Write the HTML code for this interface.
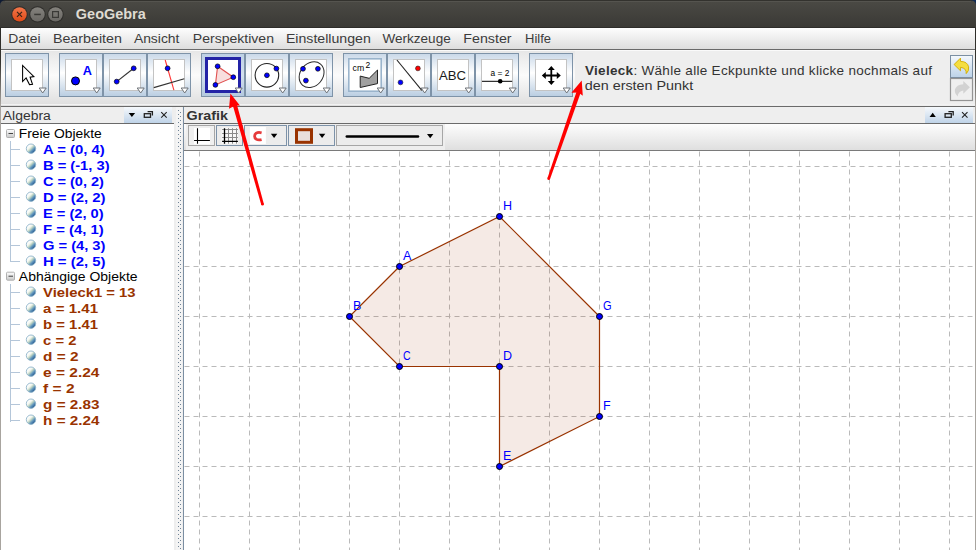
<!DOCTYPE html>
<html><head><meta charset="utf-8"><title>GeoGebra</title>
<style>
html,body{margin:0;padding:0;background:#fff;}
body{width:976px;height:550px;overflow:hidden;position:relative;font-family:"Liberation Sans", sans-serif;}
svg{position:absolute;left:0;top:0;display:block;font-family:"Liberation Sans", sans-serif;}
</style></head><body>
<svg width="976" height="550" viewBox="0 0 976 550">

<defs>
 <linearGradient id="gMenu" x1="0" y1="0" x2="0" y2="1"><stop offset="0" stop-color="#fdfdfd"/><stop offset="1" stop-color="#dedede"/></linearGradient>
 <linearGradient id="gTool" x1="0" y1="0" x2="0" y2="1"><stop offset="0" stop-color="#e6e6e6"/><stop offset="0.45" stop-color="#fbfbfb"/><stop offset="1" stop-color="#dedede"/></linearGradient>
 <linearGradient id="gBtn" x1="0" y1="0" x2="0" y2="1"><stop offset="0" stop-color="#c9d8e8"/><stop offset="0.45" stop-color="#ffffff"/><stop offset="1" stop-color="#b9cde1"/></linearGradient>
 <linearGradient id="gBtnSel" x1="0" y1="0" x2="0" y2="1"><stop offset="0" stop-color="#bdd0e5"/><stop offset="0.5" stop-color="#d2e0ee"/><stop offset="1" stop-color="#b3c8de"/></linearGradient>
 <linearGradient id="gHdr" x1="0" y1="0" x2="0" y2="1"><stop offset="0" stop-color="#f6f9fc"/><stop offset="1" stop-color="#bfd3e8"/></linearGradient>
 <linearGradient id="gStyle" x1="0" y1="0" x2="0" y2="1"><stop offset="0" stop-color="#fdfdfd"/><stop offset="1" stop-color="#dfdfdf"/></linearGradient>
 <linearGradient id="gUndo" x1="0" y1="0" x2="0" y2="1"><stop offset="0" stop-color="#f4f8fc"/><stop offset="1" stop-color="#bcd2e8"/></linearGradient>
 <linearGradient id="gClose" x1="0" y1="0" x2="0" y2="1"><stop offset="0" stop-color="#f2764a"/><stop offset="1" stop-color="#df4a17"/></linearGradient>
 <linearGradient id="gGrayBtn" x1="0" y1="0" x2="0" y2="1"><stop offset="0" stop-color="#84827d"/><stop offset="1" stop-color="#6a6864"/></linearGradient>
 <linearGradient id="gMinus" x1="0" y1="0" x2="0" y2="1"><stop offset="0" stop-color="#ffffff"/><stop offset="1" stop-color="#c8c8c8"/></linearGradient>
 <linearGradient id="gBall" x1="0.2" y1="0.2" x2="0.8" y2="0.8"><stop offset="0" stop-color="#ffffff"/><stop offset="0.3" stop-color="#f2f6ee"/><stop offset="0.5" stop-color="#bdd3c2"/><stop offset="0.75" stop-color="#6197bd"/><stop offset="1" stop-color="#35679a"/></linearGradient>
 <linearGradient id="gBorder" gradientUnits="userSpaceOnUse" x1="0" y1="28" x2="0" y2="105"><stop offset="0" stop-color="#2c2b27"/><stop offset="0.45" stop-color="#35342f"/><stop offset="1" stop-color="#a8a49f"/></linearGradient>
 <linearGradient id="gBorderR" gradientUnits="userSpaceOnUse" x1="0" y1="28" x2="0" y2="105"><stop offset="0" stop-color="#3c3b37"/><stop offset="0.45" stop-color="#4a4944"/><stop offset="1" stop-color="#c4c1bb"/></linearGradient>
 <linearGradient id="gTitle" x1="0" y1="0" x2="0" y2="1"><stop offset="0" stop-color="#4b4a45"/><stop offset="1" stop-color="#3a3935"/></linearGradient>
 <pattern id="pDots" x="0" y="0" width="4" height="4" patternUnits="userSpaceOnUse"><rect x="0" y="0" width="1" height="1" fill="#6f8396"/><rect x="2" y="2" width="1" height="1" fill="#6f8396"/></pattern>
</defs>
<rect x="0" y="0" width="976" height="550" fill="#ffffff"/>
<rect x="0" y="0" width="976" height="28" fill="url(#gTitle)"/>
<rect x="0" y="0" width="976" height="1" fill="#33322e"/>
<rect x="0" y="27" width="976" height="1" fill="#2e2d2a"/>
<path d="M0 0 H5.5 A5.5 5.5 0 0 0 0 5.5 Z" fill="#0f1b33"/>
<path d="M976 0 H970.5 A5.5 5.5 0 0 1 976 5.5 Z" fill="#102a55"/>
<rect x="5" y="1" width="966" height="1" fill="#55544f"/>
<circle cx="19.5" cy="14.4" r="8.2" fill="#2e2d2a"/>
<circle cx="19.5" cy="14.4" r="7.2" fill="url(#gClose)"/>
<circle cx="37.5" cy="14.4" r="8.2" fill="#2e2d2a"/>
<circle cx="37.5" cy="14.4" r="7.2" fill="url(#gGrayBtn)"/>
<circle cx="55.5" cy="14.4" r="8.2" fill="#2e2d2a"/>
<circle cx="55.5" cy="14.4" r="7.2" fill="url(#gGrayBtn)"/>
<path d="M17 11.9 L22 16.9 M22 11.9 L17 16.9" stroke="#3a2418" stroke-width="1.2"/>
<rect x="34.2" y="13.7" width="6.6" height="1.5" fill="#3a3936"/>
<rect x="52.6" y="11.6" width="5.8" height="5.8" fill="none" stroke="#3a3936" stroke-width="1.2"/>
<text x="75.88" y="19" font-size="14" font-weight="bold" fill="#dfdbd2" textLength="69.84" lengthAdjust="spacingAndGlyphs" >GeoGebra</text>
<rect x="0" y="28" width="976" height="21" fill="url(#gMenu)"/>
<rect x="0" y="49" width="976" height="1" fill="#6a6a6a"/>
<text x="8.31" y="43" font-size="13" font-weight="normal" fill="#3c3c3c" textLength="32.38" lengthAdjust="spacingAndGlyphs" >Datei</text>
<text x="52.91" y="43" font-size="13" font-weight="normal" fill="#3c3c3c" textLength="68.98" lengthAdjust="spacingAndGlyphs" >Bearbeiten</text>
<text x="133.91" y="43" font-size="13" font-weight="normal" fill="#3c3c3c" textLength="45.48" lengthAdjust="spacingAndGlyphs" >Ansicht</text>
<text x="192.81" y="43" font-size="13" font-weight="normal" fill="#3c3c3c" textLength="81.18" lengthAdjust="spacingAndGlyphs" >Perspektiven</text>
<text x="285.91" y="43" font-size="13" font-weight="normal" fill="#3c3c3c" textLength="84.88" lengthAdjust="spacingAndGlyphs" >Einstellungen</text>
<text x="382.51" y="43" font-size="13" font-weight="normal" fill="#3c3c3c" textLength="68.18" lengthAdjust="spacingAndGlyphs" >Werkzeuge</text>
<text x="463.31" y="43" font-size="13" font-weight="normal" fill="#3c3c3c" textLength="48.28" lengthAdjust="spacingAndGlyphs" >Fenster</text>
<text x="525.11" y="43" font-size="13" font-weight="normal" fill="#3c3c3c" textLength="25.98" lengthAdjust="spacingAndGlyphs" >Hilfe</text>
<rect x="0" y="50" width="575" height="56" fill="url(#gTool)"/>
<rect x="575" y="50" width="401" height="56" fill="#eeeeee"/>
<rect x="0" y="50" width="976" height="1" fill="#fafafa"/>
<rect x="0" y="104" width="976" height="1" fill="#f2f2f2"/>
<rect x="0" y="106" width="976" height="1" fill="#6a6a6a"/>
<rect x="5.5" y="53.5" width="43" height="43" fill="url(#gBtn)" stroke="#7e93a8"/>
<rect x="11.5" y="59.5" width="31" height="31" fill="#fff" stroke="#c3c3c3"/>
<rect x="59.5" y="53.5" width="43" height="43" fill="url(#gBtn)" stroke="#7e93a8"/>
<rect x="65.5" y="59.5" width="31" height="31" fill="#fff" stroke="#c3c3c3"/>
<rect x="103.5" y="53.5" width="43" height="43" fill="url(#gBtn)" stroke="#7e93a8"/>
<rect x="109.5" y="59.5" width="31" height="31" fill="#fff" stroke="#c3c3c3"/>
<rect x="147.5" y="53.5" width="43" height="43" fill="url(#gBtn)" stroke="#7e93a8"/>
<rect x="153.5" y="59.5" width="31" height="31" fill="#fff" stroke="#c3c3c3"/>
<rect x="201.5" y="53.5" width="43" height="43" fill="url(#gBtnSel)" stroke="#7e93a8"/>
<rect x="245.5" y="53.5" width="43" height="43" fill="url(#gBtn)" stroke="#7e93a8"/>
<rect x="251.5" y="59.5" width="31" height="31" fill="#fff" stroke="#c3c3c3"/>
<rect x="289.5" y="53.5" width="43" height="43" fill="url(#gBtn)" stroke="#7e93a8"/>
<rect x="295.5" y="59.5" width="31" height="31" fill="#fff" stroke="#c3c3c3"/>
<rect x="343.5" y="53.5" width="43" height="43" fill="url(#gBtn)" stroke="#7e93a8"/>
<rect x="349.5" y="59.5" width="31" height="31" fill="#fff" stroke="#c3c3c3"/>
<rect x="387.5" y="53.5" width="43" height="43" fill="url(#gBtn)" stroke="#7e93a8"/>
<rect x="393.5" y="59.5" width="31" height="31" fill="#fff" stroke="#c3c3c3"/>
<rect x="431.5" y="53.5" width="43" height="43" fill="url(#gBtn)" stroke="#7e93a8"/>
<rect x="437.5" y="59.5" width="31" height="31" fill="#fff" stroke="#c3c3c3"/>
<rect x="475.5" y="53.5" width="43" height="43" fill="url(#gBtn)" stroke="#7e93a8"/>
<rect x="481.5" y="59.5" width="31" height="31" fill="#fff" stroke="#c3c3c3"/>
<rect x="529.5" y="53.5" width="43" height="43" fill="url(#gBtn)" stroke="#7e93a8"/>
<rect x="535.5" y="59.5" width="31" height="31" fill="#fff" stroke="#c3c3c3"/>
<rect x="206.5" y="58.5" width="33" height="33" fill="#fff" stroke="#2323a6" stroke-width="3"/>
<path d="M22.6 65.4 L22.6 81.5 L26.1 77.9 L29.5 84.6 L32.5 84.3 L30.1 77.2 L33.9 76.6 Z" fill="#fff" stroke="#000" stroke-width="1.05" stroke-linejoin="miter"/>
<circle cx="75.5" cy="80.9" r="4" fill="#0000ff" stroke="#000" stroke-width="1"/>
<text x="82.8" y="75.3" font-family='"Liberation Sans", sans-serif' font-size="13" font-weight="bold" fill="#0000ff" textLength="9.2" lengthAdjust="spacingAndGlyphs">A</text>
<line x1="116.7" y1="81.6" x2="133.7" y2="68.3" stroke="#333" stroke-width="1.2"/>
<circle cx="116.7" cy="81.6" r="2.4" fill="#0000ff" stroke="#000" stroke-width="0.7"/>
<circle cx="133.7" cy="68.3" r="2.4" fill="#0000ff" stroke="#000" stroke-width="0.7"/>
<line x1="165.2" y1="60" x2="173.9" y2="90.2" stroke="#ff3333" stroke-width="1.1"/>
<line x1="153.8" y1="87.6" x2="184.3" y2="78.7" stroke="#333" stroke-width="1.1"/>
<circle cx="167.6" cy="68.3" r="2.4" fill="#0000ff" stroke="#000" stroke-width="0.7"/>
<path d="M217.6 66.3 L233.3 77.2 L215.4 84.9 Z" fill="#f8dede" stroke="#e05050" stroke-width="1.1"/>
<circle cx="217.6" cy="66.3" r="2.4" fill="#0000ff" stroke="#000" stroke-width="0.7"/>
<circle cx="233.3" cy="77.2" r="2.4" fill="#0000ff" stroke="#000" stroke-width="0.7"/>
<circle cx="215.4" cy="84.9" r="2.4" fill="#0000ff" stroke="#000" stroke-width="0.7"/>
<circle cx="266.9" cy="75.3" r="11.8" fill="none" stroke="#222" stroke-width="1.1"/>
<circle cx="266.9" cy="75.3" r="2.4" fill="#0000ff" stroke="#000" stroke-width="0.7"/>
<circle cx="276.4" cy="68.6" r="2.4" fill="#0000ff" stroke="#000" stroke-width="0.7"/>
<ellipse cx="311.6" cy="74.7" rx="13.9" ry="11.3" transform="rotate(-50 311.6 74.7)" fill="none" stroke="#2a2a2a" stroke-width="1"/>
<circle cx="303" cy="68.8" r="2.4" fill="#0000ff" stroke="#000" stroke-width="0.7"/>
<circle cx="317.9" cy="68.8" r="2.4" fill="#0000ff" stroke="#000" stroke-width="0.7"/>
<circle cx="305.9" cy="80.6" r="2.4" fill="#0000ff" stroke="#000" stroke-width="0.7"/>
<rect x="348.8" y="58.8" width="32.4" height="32.4" fill="#fff" stroke="#9ab4cc" stroke-width="1.6"/>
<text x="352.6" y="70.5" font-family='"Liberation Sans", sans-serif' font-size="9.5" fill="#000" textLength="11.6" lengthAdjust="spacingAndGlyphs">cm</text>
<text x="365.4" y="68.2" font-family='"Liberation Sans", sans-serif' font-size="8.5" fill="#000">2</text>
<path d="M360.2 76.1 L369.2 78.3 L377.5 70 L377.5 83.6 L360.2 87.5 Z" fill="#a0a0a0" stroke="#222" stroke-width="1"/>
<line x1="396.9" y1="60" x2="421.8" y2="90.4" stroke="#222" stroke-width="1.1"/>
<circle cx="417.9" cy="68.4" r="2.4" fill="#ff0000" stroke="#222" stroke-width="0.6"/>
<circle cx="400.5" cy="82.4" r="2.4" fill="#0000ff" stroke="#222" stroke-width="0.6"/>
<text x="439" y="79.7" font-family='"Liberation Sans", sans-serif' font-size="13" fill="#1a1a1a" textLength="27" lengthAdjust="spacingAndGlyphs">ABC</text>
<text x="490.6" y="75.9" font-family='"Liberation Sans", sans-serif' font-size="9.5" fill="#000" textLength="18.8" lengthAdjust="spacingAndGlyphs">a = 2</text>
<line x1="482" y1="81.3" x2="512.2" y2="81.3" stroke="#000" stroke-width="1"/>
<circle cx="500.2" cy="81.2" r="2.3" fill="#000"/>
<path d="M551.3 68 V83 M543.8 75.5 H558.8" stroke="#000" stroke-width="1.8"/>
<path d="M551.3 66 L547.8 70 H554.8 Z M551.3 85 L547.8 81 H554.8 Z M541.8 75.5 L545.8 72 V79 Z M560.8 75.5 L556.8 72 V79 Z" fill="#000"/>
<path d="M39.2 88 H46.2 L42.7 93 Z" fill="#fff" stroke="#6e7378" stroke-width="1"/>
<path d="M93.2 88 H100.2 L96.7 93 Z" fill="#fff" stroke="#6e7378" stroke-width="1"/>
<path d="M137.2 88 H144.2 L140.7 93 Z" fill="#fff" stroke="#6e7378" stroke-width="1"/>
<path d="M181.2 88 H188.2 L184.7 93 Z" fill="#fff" stroke="#6e7378" stroke-width="1"/>
<path d="M235.2 88 H242.2 L238.7 93 Z" fill="#fff" stroke="#6e7378" stroke-width="1"/>
<path d="M279.2 88 H286.2 L282.7 93 Z" fill="#fff" stroke="#6e7378" stroke-width="1"/>
<path d="M323.2 88 H330.2 L326.7 93 Z" fill="#fff" stroke="#6e7378" stroke-width="1"/>
<path d="M377.2 88 H384.2 L380.7 93 Z" fill="#fff" stroke="#6e7378" stroke-width="1"/>
<path d="M421.2 88 H428.2 L424.7 93 Z" fill="#fff" stroke="#6e7378" stroke-width="1"/>
<path d="M465.2 88 H472.2 L468.7 93 Z" fill="#fff" stroke="#6e7378" stroke-width="1"/>
<path d="M509.2 88 H516.2 L512.7 93 Z" fill="#fff" stroke="#6e7378" stroke-width="1"/>
<path d="M563.2 88 H570.2 L566.7 93 Z" fill="#fff" stroke="#6e7378" stroke-width="1"/>
<text x="585" y="75" font-size="13.5" fill="#333" textLength="347" lengthAdjust="spacing"><tspan font-weight="bold">Vieleck</tspan>: Wähle alle Eckpunkte und klicke nochmals auf</text>
<text x="584.80" y="89.5" font-size="13.5" font-weight="normal" fill="#333" textLength="108.41" lengthAdjust="spacingAndGlyphs" >den ersten Punkt</text>
<rect x="950.5" y="55.5" width="22" height="22" fill="url(#gUndo)" stroke="#7b8fa3"/>
<rect x="950.5" y="78.5" width="22" height="22" fill="#efefef" stroke="#949494" stroke-width="1.2"/>
<path d="M954.1 64.5 L960.5 58.1 V61.4 Q967.3 61.4 968.6 66.8 Q969.3 71 966.2 73.6 Q966.8 68.2 960.5 67.3 V70.8 Z" fill="#f5de40" stroke="#d2ac00" stroke-width="0.9" stroke-linejoin="round"/>
<path d="M969.9 87.3 L963.3 81.1 V84.2 Q956.3 84.5 954.9 89.6 Q954.3 93.6 957.7 96.4 Q957.9 91.2 963.3 90.4 V93.8 Z" fill="#d2d2d2"/>
<rect x="975" y="28" width="1" height="522" fill="url(#gBorder)"/>
<rect x="0" y="28" width="1" height="522" fill="url(#gBorder)"/>
<rect x="1" y="107" width="173" height="16" fill="#eeeeee"/>
<rect x="124" y="107" width="48" height="16" fill="url(#gHdr)"/>
<rect x="1" y="123" width="173" height="1" fill="#6a6a6a"/>
<rect x="1" y="124" width="173" height="426" fill="#ffffff"/>
<text x="2.83" y="119.5" font-size="12.5" font-weight="normal" fill="#333" textLength="48.05" lengthAdjust="spacingAndGlyphs" >Algebra</text>
<path d="M128.7 112.9 H135.1 L131.9 116.9 Z" fill="#000"/>
<path d="M147.6 111.6 H152.4 V115.6" fill="none" stroke="#222" stroke-width="1.3"/>
<rect x="144.3" y="113.7" width="6.2" height="3.6" fill="none" stroke="#222" stroke-width="1.3"/>
<path d="M161.2 112.2 L166.7 117.6 M166.7 112.2 L161.2 117.6" stroke="#222" stroke-width="1.1"/>
<rect x="174" y="107" width="10" height="443" fill="#eeeeee"/>
<rect x="176" y="107" width="6" height="443" fill="#f4f4f4"/>
<rect x="178" y="110" width="3" height="440" fill="url(#pDots)"/>
<rect x="183" y="107" width="1" height="443" fill="#7b8ea2"/>
<rect x="6.5" y="129.5" width="8" height="8" rx="1" fill="url(#gMinus)" stroke="#b0b0b0"/>
<rect x="8.5" y="133" width="4.5" height="1" fill="#444"/>
<text x="18.74" y="137.8" font-size="12" font-weight="normal" fill="#000" textLength="83.02" lengthAdjust="spacingAndGlyphs" >Freie Objekte</text>
<rect x="6.5" y="272.2" width="8" height="8" rx="1" fill="url(#gMinus)" stroke="#b0b0b0"/>
<rect x="8.5" y="275.7" width="4.5" height="1" fill="#444"/>
<text x="18.84" y="280.8" font-size="12" font-weight="normal" fill="#000" textLength="118.72" lengthAdjust="spacingAndGlyphs" >Abhängige Objekte</text>
<rect x="10" y="141" width="1" height="121" fill="#b4c6d9"/>
<rect x="10" y="284" width="1" height="138" fill="#b4c6d9"/>
<rect x="11" y="149" width="9" height="1" fill="#b4c6d9"/>
<circle cx="31" cy="148.7" r="4.7" fill="url(#gBall)" stroke="#8fb3c9" stroke-width="0.9"/>
<text x="42.94" y="153.5" font-size="12" font-weight="bold" fill="#0000ff" textLength="61.72" lengthAdjust="spacingAndGlyphs" >A = (0, 4)</text>
<rect x="11" y="165" width="9" height="1" fill="#b4c6d9"/>
<circle cx="31" cy="164.7" r="4.7" fill="url(#gBall)" stroke="#8fb3c9" stroke-width="0.9"/>
<text x="42.94" y="169.5" font-size="12" font-weight="bold" fill="#0000ff" textLength="66.62" lengthAdjust="spacingAndGlyphs" >B = (-1, 3)</text>
<rect x="11" y="181" width="9" height="1" fill="#b4c6d9"/>
<circle cx="31" cy="180.7" r="4.7" fill="url(#gBall)" stroke="#8fb3c9" stroke-width="0.9"/>
<text x="42.94" y="185.5" font-size="12" font-weight="bold" fill="#0000ff" textLength="61.02" lengthAdjust="spacingAndGlyphs" >C = (0, 2)</text>
<rect x="11" y="197" width="9" height="1" fill="#b4c6d9"/>
<circle cx="31" cy="196.7" r="4.7" fill="url(#gBall)" stroke="#8fb3c9" stroke-width="0.9"/>
<text x="42.94" y="201.5" font-size="12" font-weight="bold" fill="#0000ff" textLength="62.52" lengthAdjust="spacingAndGlyphs" >D = (2, 2)</text>
<rect x="11" y="213" width="9" height="1" fill="#b4c6d9"/>
<circle cx="31" cy="212.7" r="4.7" fill="url(#gBall)" stroke="#8fb3c9" stroke-width="0.9"/>
<text x="42.94" y="217.5" font-size="12" font-weight="bold" fill="#0000ff" textLength="60.72" lengthAdjust="spacingAndGlyphs" >E = (2, 0)</text>
<rect x="11" y="229" width="9" height="1" fill="#b4c6d9"/>
<circle cx="31" cy="228.7" r="4.7" fill="url(#gBall)" stroke="#8fb3c9" stroke-width="0.9"/>
<text x="42.94" y="233.5" font-size="12" font-weight="bold" fill="#0000ff" textLength="60.72" lengthAdjust="spacingAndGlyphs" >F = (4, 1)</text>
<rect x="11" y="245" width="9" height="1" fill="#b4c6d9"/>
<circle cx="31" cy="244.7" r="4.7" fill="url(#gBall)" stroke="#8fb3c9" stroke-width="0.9"/>
<text x="42.94" y="249.5" font-size="12" font-weight="bold" fill="#0000ff" textLength="62.52" lengthAdjust="spacingAndGlyphs" >G = (4, 3)</text>
<rect x="11" y="261" width="9" height="1" fill="#b4c6d9"/>
<circle cx="31" cy="260.7" r="4.7" fill="url(#gBall)" stroke="#8fb3c9" stroke-width="0.9"/>
<text x="42.94" y="265.5" font-size="12" font-weight="bold" fill="#0000ff" textLength="62.52" lengthAdjust="spacingAndGlyphs" >H = (2, 5)</text>
<rect x="11" y="292" width="9" height="1" fill="#b4c6d9"/>
<circle cx="31" cy="291.7" r="4.7" fill="url(#gBall)" stroke="#8fb3c9" stroke-width="0.9"/>
<text x="43.14" y="297.2" font-size="12" font-weight="bold" fill="#993300" textLength="92.42" lengthAdjust="spacingAndGlyphs" >Vieleck1 = 13</text>
<rect x="11" y="308" width="9" height="1" fill="#b4c6d9"/>
<circle cx="31" cy="307.7" r="4.7" fill="url(#gBall)" stroke="#8fb3c9" stroke-width="0.9"/>
<text x="43.14" y="313.2" font-size="12" font-weight="bold" fill="#993300" textLength="54.92" lengthAdjust="spacingAndGlyphs" >a = 1.41</text>
<rect x="11" y="324" width="9" height="1" fill="#b4c6d9"/>
<circle cx="31" cy="323.7" r="4.7" fill="url(#gBall)" stroke="#8fb3c9" stroke-width="0.9"/>
<text x="43.14" y="329.2" font-size="12" font-weight="bold" fill="#993300" textLength="54.92" lengthAdjust="spacingAndGlyphs" >b = 1.41</text>
<rect x="11" y="340" width="9" height="1" fill="#b4c6d9"/>
<circle cx="31" cy="339.7" r="4.7" fill="url(#gBall)" stroke="#8fb3c9" stroke-width="0.9"/>
<text x="43.14" y="345.2" font-size="12" font-weight="bold" fill="#993300" textLength="33.22" lengthAdjust="spacingAndGlyphs" >c = 2</text>
<rect x="11" y="356" width="9" height="1" fill="#b4c6d9"/>
<circle cx="31" cy="355.7" r="4.7" fill="url(#gBall)" stroke="#8fb3c9" stroke-width="0.9"/>
<text x="43.14" y="361.2" font-size="12" font-weight="bold" fill="#993300" textLength="35.42" lengthAdjust="spacingAndGlyphs" >d = 2</text>
<rect x="11" y="372" width="9" height="1" fill="#b4c6d9"/>
<circle cx="31" cy="371.7" r="4.7" fill="url(#gBall)" stroke="#8fb3c9" stroke-width="0.9"/>
<text x="43.14" y="377.2" font-size="12" font-weight="bold" fill="#993300" textLength="56.32" lengthAdjust="spacingAndGlyphs" >e = 2.24</text>
<rect x="11" y="388" width="9" height="1" fill="#b4c6d9"/>
<circle cx="31" cy="387.7" r="4.7" fill="url(#gBall)" stroke="#8fb3c9" stroke-width="0.9"/>
<text x="43.14" y="393.2" font-size="12" font-weight="bold" fill="#993300" textLength="31.42" lengthAdjust="spacingAndGlyphs" >f = 2</text>
<rect x="11" y="404" width="9" height="1" fill="#b4c6d9"/>
<circle cx="31" cy="403.7" r="4.7" fill="url(#gBall)" stroke="#8fb3c9" stroke-width="0.9"/>
<text x="43.14" y="409.2" font-size="12" font-weight="bold" fill="#993300" textLength="56.32" lengthAdjust="spacingAndGlyphs" >g = 2.83</text>
<rect x="11" y="420" width="9" height="1" fill="#b4c6d9"/>
<circle cx="31" cy="419.7" r="4.7" fill="url(#gBall)" stroke="#8fb3c9" stroke-width="0.9"/>
<text x="43.14" y="425.2" font-size="12" font-weight="bold" fill="#993300" textLength="56.32" lengthAdjust="spacingAndGlyphs" >h = 2.24</text>
<rect x="184" y="107" width="791" height="16" fill="#eeeeee"/>
<rect x="925" y="107" width="48" height="16" fill="url(#gHdr)"/>
<rect x="184" y="123" width="791" height="1" fill="#6a6a6a"/>
<text x="186.53" y="119.7" font-size="12.5" font-weight="bold" fill="#333" textLength="41.35" lengthAdjust="spacingAndGlyphs" >Grafik</text>
<path d="M929.6 117 H935.8 L932.7 112.8 Z" fill="#000"/>
<path d="M948.4 111.6 H953.2 V115.6" fill="none" stroke="#222" stroke-width="1.3"/>
<rect x="945.1" y="113.7" width="6.2" height="3.6" fill="none" stroke="#222" stroke-width="1.3"/>
<path d="M962 112.2 L967.5 117.6 M967.5 112.2 L962 117.6" stroke="#222" stroke-width="1.1"/>
<rect x="184" y="124" width="791" height="26" fill="url(#gStyle)"/>
<rect x="186" y="124" width="259" height="26" fill="#eeeeee"/>
<rect x="184" y="150" width="791" height="1" fill="#7a7a7a"/>
<rect x="188.5" y="125.5" width="26" height="20" fill="#efefef" stroke="#a6a6a6"/>
<rect x="194" y="128" width="16" height="16.4" fill="#ffffff"/>
<path d="M197.5 128.2 V143.8 M194.1 140.5 H209.9" stroke="#000" stroke-width="1.1"/>
<rect x="216.5" y="125.5" width="26" height="20" fill="#ececec" stroke="#7d92a8"/>
<rect x="221.5" y="127.5" width="16.6" height="16.2" fill="#f8f8f8"/>
<path d="M228.5 128.2 V143.7 M232.5 128.2 V143.7 M236.5 128.2 V143.7 M222.1 129.5 H237.9 M222.1 133.5 H237.9 M222.1 137.5 H237.9" stroke="#8a8a8a" stroke-width="1"/>
<path d="M224.5 128.2 V143.7 M222.1 141.4 H237.9" stroke="#000" stroke-width="1.3"/>
<rect x="244.5" y="125.5" width="42" height="20" fill="#ececec" stroke="#7d92a8"/>
<rect x="249.9" y="127" width="16" height="17" fill="#ffffff"/>
<path d="M261.6 132.8 Q258.2 131.9 256.2 133.2 Q254.6 134.4 254.6 136.2 Q254.6 138 256.2 139.2 Q258.2 140.5 261.6 139.6" fill="none" stroke="#e63c3c" stroke-width="2.8" stroke-linecap="butt"/>
<path d="M270.9 133.7 H277.3 L274.1 137.9 Z" fill="#000"/>
<rect x="288.5" y="125.5" width="46" height="20" fill="#ececec" stroke="#7d92a8"/>
<rect x="296.5" y="129.7" width="15" height="12.6" fill="#e9dfdc" stroke="#993300" stroke-width="3"/>
<path d="M318.9 133.7 H325.3 L322.1 137.9 Z" fill="#000"/>
<rect x="336.5" y="125.5" width="106" height="20" fill="#ececec" stroke="#a6a6a6"/>
<line x1="346.8" y1="136.4" x2="418" y2="136.4" stroke="#000" stroke-width="2.5" stroke-linecap="round"/>
<path d="M427 134 H433.4 L430.2 138.2 Z" fill="#000"/>
<rect x="184" y="151" width="791" height="399" fill="#ffffff"/>
<line x1="199.5" y1="151" x2="199.5" y2="550" stroke="#bababa" stroke-width="1" stroke-dasharray="5 4" stroke-dashoffset="-0.5"/>
<line x1="249.5" y1="151" x2="249.5" y2="550" stroke="#bababa" stroke-width="1" stroke-dasharray="5 4" stroke-dashoffset="-0.5"/>
<line x1="299.5" y1="151" x2="299.5" y2="550" stroke="#bababa" stroke-width="1" stroke-dasharray="5 4" stroke-dashoffset="-0.5"/>
<line x1="349.5" y1="151" x2="349.5" y2="550" stroke="#bababa" stroke-width="1" stroke-dasharray="5 4" stroke-dashoffset="-0.5"/>
<line x1="399.5" y1="151" x2="399.5" y2="550" stroke="#bababa" stroke-width="1" stroke-dasharray="5 4" stroke-dashoffset="-0.5"/>
<line x1="449.5" y1="151" x2="449.5" y2="550" stroke="#bababa" stroke-width="1" stroke-dasharray="5 4" stroke-dashoffset="-0.5"/>
<line x1="499.5" y1="151" x2="499.5" y2="550" stroke="#bababa" stroke-width="1" stroke-dasharray="5 4" stroke-dashoffset="-0.5"/>
<line x1="549.5" y1="151" x2="549.5" y2="550" stroke="#bababa" stroke-width="1" stroke-dasharray="5 4" stroke-dashoffset="-0.5"/>
<line x1="599.5" y1="151" x2="599.5" y2="550" stroke="#bababa" stroke-width="1" stroke-dasharray="5 4" stroke-dashoffset="-0.5"/>
<line x1="649.5" y1="151" x2="649.5" y2="550" stroke="#bababa" stroke-width="1" stroke-dasharray="5 4" stroke-dashoffset="-0.5"/>
<line x1="699.5" y1="151" x2="699.5" y2="550" stroke="#bababa" stroke-width="1" stroke-dasharray="5 4" stroke-dashoffset="-0.5"/>
<line x1="749.5" y1="151" x2="749.5" y2="550" stroke="#bababa" stroke-width="1" stroke-dasharray="5 4" stroke-dashoffset="-0.5"/>
<line x1="799.5" y1="151" x2="799.5" y2="550" stroke="#bababa" stroke-width="1" stroke-dasharray="5 4" stroke-dashoffset="-0.5"/>
<line x1="849.5" y1="151" x2="849.5" y2="550" stroke="#bababa" stroke-width="1" stroke-dasharray="5 4" stroke-dashoffset="-0.5"/>
<line x1="899.5" y1="151" x2="899.5" y2="550" stroke="#bababa" stroke-width="1" stroke-dasharray="5 4" stroke-dashoffset="-0.5"/>
<line x1="949.5" y1="151" x2="949.5" y2="550" stroke="#bababa" stroke-width="1" stroke-dasharray="5 4" stroke-dashoffset="-0.5"/>
<line x1="184" y1="166.5" x2="975" y2="166.5" stroke="#bababa" stroke-width="1" stroke-dasharray="5 4" stroke-dashoffset="-0.5"/>
<line x1="184" y1="216.5" x2="975" y2="216.5" stroke="#bababa" stroke-width="1" stroke-dasharray="5 4" stroke-dashoffset="-0.5"/>
<line x1="184" y1="266.5" x2="975" y2="266.5" stroke="#bababa" stroke-width="1" stroke-dasharray="5 4" stroke-dashoffset="-0.5"/>
<line x1="184" y1="316.5" x2="975" y2="316.5" stroke="#bababa" stroke-width="1" stroke-dasharray="5 4" stroke-dashoffset="-0.5"/>
<line x1="184" y1="366.5" x2="975" y2="366.5" stroke="#bababa" stroke-width="1" stroke-dasharray="5 4" stroke-dashoffset="-0.5"/>
<line x1="184" y1="416.5" x2="975" y2="416.5" stroke="#bababa" stroke-width="1" stroke-dasharray="5 4" stroke-dashoffset="-0.5"/>
<line x1="184" y1="466.5" x2="975" y2="466.5" stroke="#bababa" stroke-width="1" stroke-dasharray="5 4" stroke-dashoffset="-0.5"/>
<line x1="184" y1="516.5" x2="975" y2="516.5" stroke="#bababa" stroke-width="1" stroke-dasharray="5 4" stroke-dashoffset="-0.5"/>
<path d="M399.5 266.5 L349.5 316.5 L399.5 366.5 L499.5 366.5 L499.5 466.5 L599.5 416.5 L599.5 316.5 L499.5 216.5 Z" fill="#993300" fill-opacity="0.1" stroke="#993300" stroke-width="1.2"/>
<circle cx="399.5" cy="266.5" r="3" fill="#0000ff" stroke="#000" stroke-width="1"/>
<circle cx="349.5" cy="316.5" r="3" fill="#0000ff" stroke="#000" stroke-width="1"/>
<circle cx="399.5" cy="366.5" r="3" fill="#0000ff" stroke="#000" stroke-width="1"/>
<circle cx="499.5" cy="366.5" r="3" fill="#0000ff" stroke="#000" stroke-width="1"/>
<circle cx="499.5" cy="466.5" r="3" fill="#0000ff" stroke="#000" stroke-width="1"/>
<circle cx="599.5" cy="416.5" r="3" fill="#0000ff" stroke="#000" stroke-width="1"/>
<circle cx="599.5" cy="316.5" r="3" fill="#0000ff" stroke="#000" stroke-width="1"/>
<circle cx="499.5" cy="216.5" r="3" fill="#0000ff" stroke="#000" stroke-width="1"/>
<text x="402.9" y="259.5" font-size="12.5" fill="#0000ff">A</text>
<text x="352.9" y="309.5" font-size="12.5" fill="#0000ff">B</text>
<text x="402.9" y="359.5" font-size="12.5" fill="#0000ff" textLength="7.6" lengthAdjust="spacingAndGlyphs">C</text>
<text x="502.9" y="359.5" font-size="12.5" fill="#0000ff">D</text>
<text x="502.9" y="459.5" font-size="12.5" fill="#0000ff">E</text>
<text x="602.9" y="409.5" font-size="12.5" fill="#0000ff">F</text>
<text x="602.9" y="309.5" font-size="12.5" fill="#0000ff" textLength="8.6" lengthAdjust="spacingAndGlyphs">G</text>
<text x="502.9" y="209.5" font-size="12.5" fill="#0000ff">H</text>
<path d="M263.80 203.84 L236.75 103.97 L232.71 105.10 L261.20 204.56 Z" fill="#ff0000"/>
<circle cx="262.5" cy="204.2" r="1.35" fill="#ff0000"/>
<path d="M230.4 93.5 L239.9 105.5 L235 105.5 L229 108.7 Z" fill="#ff0000"/>
<path d="M549.98 179.14 L580.81 92.24 L576.84 90.87 L547.42 178.26 Z" fill="#ff0000"/>
<circle cx="548.7" cy="178.7" r="1.35" fill="#ff0000"/>
<path d="M581.7 80.6 L582.8 95.8 L578.5 92.5 L571.4 92.8 Z" fill="#ff0000"/>
</svg>
</body></html>
